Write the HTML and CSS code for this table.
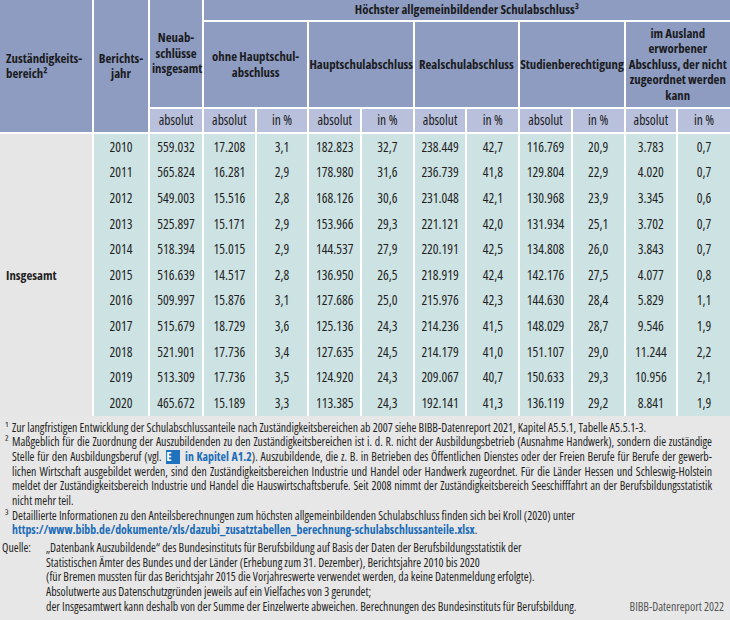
FILE: index.html
```html
<!DOCTYPE html>
<html lang="de">
<head>
<meta charset="utf-8">
<title>Schulabschluss nach Zuständigkeitsbereich</title>
<link rel="stylesheet" href="styles.css">
</head>
<body>
<table class="tbl">
  <colgroup>
    <col class="c-area"><col class="c-year"><col class="c-total">
    <col class="c-n"><col class="c-n"><col class="c-n"><col class="c-n"><col class="c-n">
    <col class="c-n"><col class="c-n"><col class="c-n"><col class="c-n"><col class="c-n">
  </colgroup>
  <thead>
    <tr class="h1">
      <th rowspan="3" class="th-left">Zuständigkeits-<br>bereich²</th>
      <th rowspan="3">Berichts-<br>jahr</th>
      <th rowspan="2">Neuab-<br>schlüsse<br>insgesamt</th>
      <th colspan="10">Höchster allgemeinbildender Schulabschluss³</th>
    </tr>
    <tr class="h2">
      <th colspan="2">ohne Hauptschul-<br>abschluss</th>
      <th colspan="2" class="nw">Hauptschulabschluss</th>
      <th colspan="2" class="nw">Realschulabschluss</th>
      <th colspan="2" class="nw">Studienberechtigung</th>
      <th colspan="2">im Ausland<br>erworbener<br>Abschluss, der nicht<br>zugeordnet werden<br>kann</th>
    </tr>
    <tr class="h3">
      <th>absolut</th>
      <th>absolut</th><th>in %</th>
      <th>absolut</th><th>in %</th>
      <th>absolut</th><th>in %</th>
      <th>absolut</th><th>in %</th>
      <th>absolut</th><th>in %</th>
    </tr>
  </thead>
  <tbody>
    <tr><td rowspan="11" class="group">Insgesamt</td><td>2010</td><td>559.032</td><td>17.208</td><td>3,1</td><td>182.823</td><td>32,7</td><td>238.449</td><td>42,7</td><td>116.769</td><td>20,9</td><td>3.783</td><td>0,7</td></tr>
    <tr><td>2011</td><td>565.824</td><td>16.281</td><td>2,9</td><td>178.980</td><td>31,6</td><td>236.739</td><td>41,8</td><td>129.804</td><td>22,9</td><td>4.020</td><td>0,7</td></tr>
    <tr><td>2012</td><td>549.003</td><td>15.516</td><td>2,8</td><td>168.126</td><td>30,6</td><td>231.048</td><td>42,1</td><td>130.968</td><td>23,9</td><td>3.345</td><td>0,6</td></tr>
    <tr><td>2013</td><td>525.897</td><td>15.171</td><td>2,9</td><td>153.966</td><td>29,3</td><td>221.121</td><td>42,0</td><td>131.934</td><td>25,1</td><td>3.702</td><td>0,7</td></tr>
    <tr><td>2014</td><td>518.394</td><td>15.015</td><td>2,9</td><td>144.537</td><td>27,9</td><td>220.191</td><td>42,5</td><td>134.808</td><td>26,0</td><td>3.843</td><td>0,7</td></tr>
    <tr><td>2015</td><td>516.639</td><td>14.517</td><td>2,8</td><td>136.950</td><td>26,5</td><td>218.919</td><td>42,4</td><td>142.176</td><td>27,5</td><td>4.077</td><td>0,8</td></tr>
    <tr><td>2016</td><td>509.997</td><td>15.876</td><td>3,1</td><td>127.686</td><td>25,0</td><td>215.976</td><td>42,3</td><td>144.630</td><td>28,4</td><td>5.829</td><td>1,1</td></tr>
    <tr><td>2017</td><td>515.679</td><td>18.729</td><td>3,6</td><td>125.136</td><td>24,3</td><td>214.236</td><td>41,5</td><td>148.029</td><td>28,7</td><td>9.546</td><td>1,9</td></tr>
    <tr><td>2018</td><td>521.901</td><td>17.736</td><td>3,4</td><td>127.635</td><td>24,5</td><td>214.179</td><td>41,0</td><td>151.107</td><td>29,0</td><td>11.244</td><td>2,2</td></tr>
    <tr><td>2019</td><td>513.309</td><td>17.736</td><td>3,5</td><td>124.920</td><td>24,3</td><td>209.067</td><td>40,7</td><td>150.633</td><td>29,3</td><td>10.956</td><td>2,1</td></tr>
    <tr><td>2020</td><td>465.672</td><td>15.189</td><td>3,3</td><td>113.385</td><td>24,3</td><td>192.141</td><td>41,3</td><td>136.119</td><td>29,2</td><td>8.841</td><td>1,9</td></tr>
  </tbody>
</table>

<div class="notes">
  <p class="fn"><span class="mark">¹</span>Zur langfristigen Entwicklung der Schulabschlussanteile nach Zuständigkeitsbereichen ab 2007 siehe BIBB-Datenreport 2021, Kapitel A5.5.1, Tabelle A5.5.1-3.</p>
  <p class="fn"><span class="mark">²</span><span class="ln j">Maßgeblich für die Zuordnung der Auszubildenden zu den Zuständigkeitsbereichen ist i. d. R. nicht der Ausbildungsbetrieb (Ausnahme Handwerk), sondern die zuständige</span><span class="ln j">Stelle für den Ausbildungsberuf (vgl. <span class="ebox">E</span> <span class="ref">in Kapitel A1.2</span>). Auszubildende, die z. B. in Betrieben des Öffentlichen Dienstes oder der Freien Berufe für Berufe der gewerb-</span><span class="ln j">lichen Wirtschaft ausgebildet werden, sind den Zuständigkeitsbereichen Industrie und Handel oder Handwerk zugeordnet. Für die Länder Hessen und Schleswig-Holstein</span><span class="ln j">meldet der Zuständigkeitsbereich Industrie und Handel die Hauswirtschaftsberufe. Seit 2008 nimmt der Zuständigkeitsbereich Seeschifffahrt an der Berufsbildungsstatistik</span><span class="ln">nicht mehr teil.</span></p>
  <p class="fn"><span class="mark">³</span><span class="ln">Detaillierte Informationen zu den Anteilsberechnungen zum höchsten allgemeinbildenden Schulabschluss finden sich bei Kroll (2020) unter</span><span class="ln"><span class="ref">https://www.bibb.de/dokumente/xls/dazubi_zusatztabellen_berechnung-schulabschlussanteile.xlsx</span>.</span></p>
  <div class="source">
    <span class="src-label">Quelle:</span>
    <div class="src-text">
      <span class="ln">„Datenbank Auszubildende“ des Bundesinstituts für Berufsbildung auf Basis der Daten der Berufsbildungsstatistik der</span>
      <span class="ln">Statistischen Ämter des Bundes und der Länder (Erhebung zum 31. Dezember), Berichtsjahre 2010 bis 2020</span>
      <span class="ln">(für Bremen mussten für das Berichtsjahr 2015 die Vorjahreswerte verwendet werden, da keine Datenmeldung erfolgte).</span>
      <span class="ln">Absolutwerte aus Datenschutzgründen jeweils auf ein Vielfaches von 3 gerundet;</span>
      <span class="ln last"><span>der Insgesamtwert kann deshalb von der Summe der Einzelwerte abweichen. Berechnungen des Bundesinstituts für Berufsbildung.</span><span class="brand">BIBB-Datenreport 2022</span></span>
    </div>
  </div>
</div>
</body>
</html>
```

FILE: styles.css
```css
html, body {
  margin: 0;
  padding: 0;
}

body {
  width: 730px;
  height: 620px;
  overflow: hidden;
  background: #e7e7e7;
  color: #1f1f1f;
  font-family: "Open Sans", "Liberation Sans", sans-serif;
  font-stretch: 75%;
}

.tbl {
  width: 730px;
  table-layout: fixed;
  border-collapse: collapse;
}

.c-area { width: 93px; }
.c-year { width: 56px; }
.c-total { width: 54px; }
.c-n { width: 52.7px; }

.tbl th {
  background: #8d9cc0;
  color: #1b1b22;
  font-size: 12.8px;
  line-height: 15.5px;
  font-weight: bold;
  font-stretch: 75%;
  text-align: center;
  vertical-align: middle;
  padding: 0 2px;
  border-left: 2px solid #fff;
  border-bottom: 2px solid #fff;
}

.tbl th.nw {
  white-space: nowrap;
  padding: 0;
}

.tbl th.th-left {
  text-align: left;
  padding-left: 6px;
  border-left: none;
}

.h1 th { height: 20px; }
.h2 th { height: 85px; }
.h3 th {
  height: 23px;
  background: #b8c0dc;
  font-weight: normal;
  font-size: 13.5px;
}

.tbl td {
  background: #cde3e3;
  font-size: 13.5px;
  text-align: center;
  vertical-align: middle;
  height: 25.6px;
  padding: 0;
  border-left: 2px solid #fff;
}

.tbl td.group {
  background: #e6e6e6;
  text-align: left;
  font-weight: bold;
  font-size: 12.8px;
  padding-left: 6px;
  border-left: none;
}

.notes {
  padding: 4px 18px 0 0;
  font-size: 11.8px;
  line-height: 14.7px;
}

.fn {
  position: relative;
  margin: 0;
  padding-left: 12px;
}

.mark {
  position: absolute;
  left: 5px;
  top: 0;
}

.ln {
  display: block;
  white-space: nowrap;
}

.fn .ln {
  height: 14.7px;
}

.ln.j {
  text-align: justify;
  text-align-last: justify;
  word-spacing: -1px;
}

.ref {
  color: #1b6cb8;
  font-weight: bold;
}

.ebox {
  display: inline-block;
  width: 14px;
  height: 14px;
  line-height: 14px;
  background: #1f72bd;
  color: #fff;
  font-weight: bold;
  font-size: 12.5px;
  text-align: center;
  vertical-align: middle;
  margin: -2px 2px 0;
}

.source {
  display: flex;
  margin-top: 3px;
  padding-left: 2px;
}

.src-label {
  flex: none;
  width: 44px;
}

.src-text {
  flex: 1;
  min-width: 0;
}

.ln.last {
  display: flex;
  justify-content: space-between;
}

.brand {
  color: #555;
  margin-right: -12px;
}
```
